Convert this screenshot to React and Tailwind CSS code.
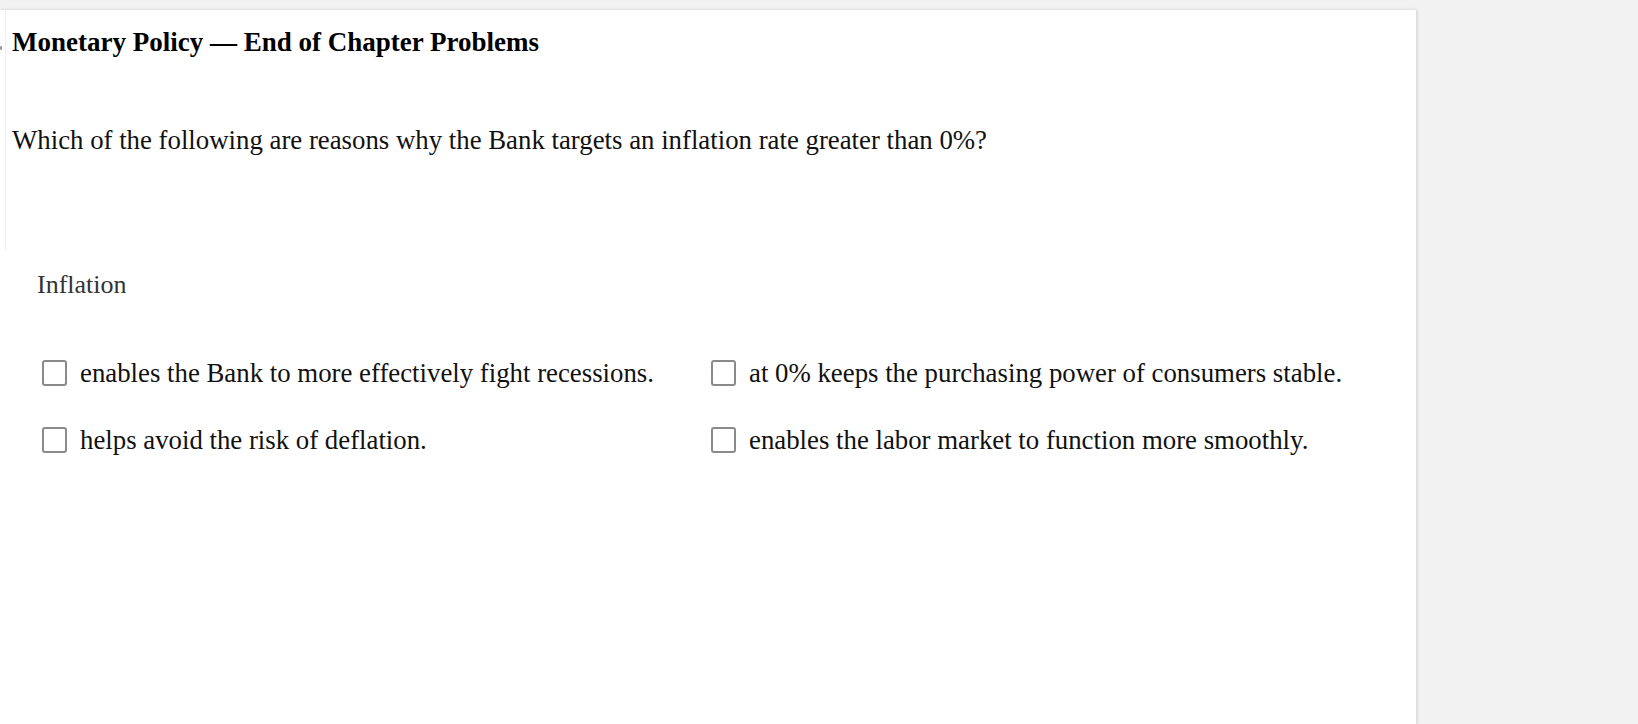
export default function App() {
  const opts = [
    "enables the Bank to more effectively fight recessions.",
    "at 0% keeps the purchasing power of consumers stable.",
    "helps avoid the risk of deflation.",
    "enables the labor market to function more smoothly.",
  ];
  return (
    <div className="min-h-[724px] w-full bg-[#f2f2f2] pt-[10px]" style={{ fontFamily: '"Liberation Serif", "Times New Roman", serif' }}>
      <div className="relative h-[714px] w-[1416px] bg-white shadow-[1px_0_3px_rgba(0,0,0,0.15)]">
        <div className="absolute left-0 top-[36px] h-[4px] w-[2px] rounded-full bg-[#999]" />
        <div className="ml-[5px] border-l border-[#f0f0f0] pb-[21px] pl-[6px] pt-[18px]">
          <h1 className="text-[27px] font-bold leading-[28px] text-black">Monetary Policy — End of Chapter Problems</h1>
          <p className="mt-[70px] text-[26.8px] leading-[28px] text-[#111]">Which of the following are reasons why the Bank targets an inflation rate greater than 0%?</p>
          <div className="h-[76px]" />
        </div>
        <div className="pl-[37px] pt-[20px]">
          <div className="text-[26px] leading-[28px] text-[#333]">Inflation</div>
          <div className="mt-[60px] grid w-[1340px] grid-cols-[669px_1fr] gap-y-[39px] pl-[5px]">
            {opts.map((o) => (
              <label key={o} className="flex items-center gap-[13px] text-[26.8px] leading-[28px] text-[#111]">
                <span className="h-[26px] w-[25px] shrink-0 rounded-[3px] border-2 border-[#8a8a8a] bg-white" />
                <span>{o}</span>
              </label>
            ))}
          </div>
        </div>
      </div>
    </div>
  );
}
